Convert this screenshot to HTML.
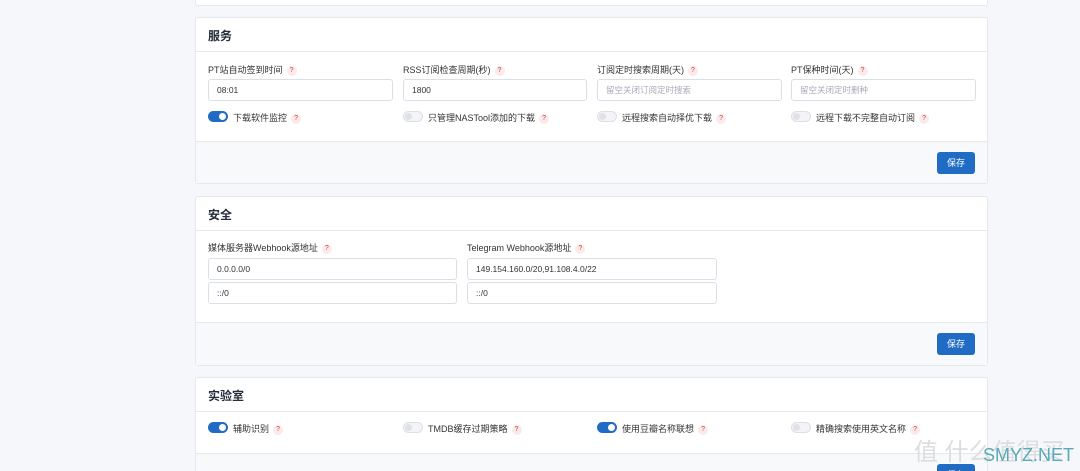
<html><head><style>
html,body{margin:0;height:471px;overflow:hidden}
body{background:#f5f7fb;font-family:"Liberation Sans","Noto Sans CJK SC",sans-serif;width:1080px;position:relative;color:#232e3c}
.card{position:absolute;left:195px;width:793px;background:#fff;border:1px solid #e6e8ee;border-radius:3px;box-sizing:border-box}
.hd{position:absolute;left:12px;font-size:12px;font-weight:bold}
.line{position:absolute;left:0;right:0;border-top:1px solid #e6e8ee}
.ft{position:absolute;left:0;right:0;bottom:0;background:#f8f9fb;border-top:1px solid #e6e8ee}
.btn{position:absolute;right:12px;width:38px;height:22px;background:#206bc4;border-radius:3px;color:#fff;font-size:9px;text-align:center;line-height:22px}
.lbl{position:absolute;font-size:9px;color:#333}
.q{display:inline-block;width:10px;height:10px;border-radius:5px;background:#fbeaea;color:#d63939;font-size:7px;text-align:center;line-height:10px;margin-left:4px;vertical-align:middle}
.in{position:absolute;height:22px;border:1px solid #dadfe5;border-radius:3px;box-sizing:border-box;font-size:8.5px;line-height:20px;padding-left:8px;color:#333}
.ph{color:#aab}
.sw{position:absolute;width:20px;height:11px;border-radius:6px;border:1px solid #dde;box-sizing:border-box;background:#f3f4f6}
.sw:after{content:"";position:absolute;left:1px;top:1px;width:7px;height:7px;border-radius:4px;background:#dfe1e5}
.sw.on{background:#206bc4;border-color:#206bc4}
.sw.on:after{left:10px;background:#fff}
</style></head><body>
<div class="card" style="top:-5px;height:11px"></div>

<div class="card" style="top:17px;height:167px">
<div class="hd" style="top:9px">服务</div>
<div class="line" style="top:33px"></div>
<div class="lbl" style="left:12px;top:45px">PT站自动签到时间<span class="q">?</span></div>
<div class="lbl" style="left:207px;top:45px">RSS订阅检查周期(秒)<span class="q">?</span></div>
<div class="lbl" style="left:401px;top:45px">订阅定时搜索周期(天)<span class="q">?</span></div>
<div class="lbl" style="left:595px;top:45px">PT保种时间(天)<span class="q">?</span></div>
<div class="in" style="left:12px;top:61px;width:185px">08:01</div>
<div class="in" style="left:207px;top:61px;width:184px">1800</div>
<div class="in ph" style="left:401px;top:61px;width:185px">留空关闭订阅定时搜索</div>
<div class="in ph" style="left:595px;top:61px;width:185px">留空关闭定时删种</div>
<div class="sw on" style="left:12px;top:93px"></div><div class="lbl" style="left:37px;top:93px">下载软件监控<span class="q">?</span></div>
<div class="sw" style="left:207px;top:93px"></div><div class="lbl" style="left:232px;top:93px">只管理NASTool添加的下载<span class="q">?</span></div>
<div class="sw" style="left:401px;top:93px"></div><div class="lbl" style="left:426px;top:93px">远程搜索自动择优下载<span class="q">?</span></div>
<div class="sw" style="left:595px;top:93px"></div><div class="lbl" style="left:620px;top:93px">远程下载不完整自动订阅<span class="q">?</span></div>
<div class="ft" style="height:41px"><div class="btn" style="top:10px">保存</div></div>
</div>

<div class="card" style="top:196px;height:170px">
<div class="hd" style="top:9px">安全</div>
<div class="line" style="top:33px"></div>
<div class="lbl" style="left:12px;top:44px">媒体服务器Webhook源地址<span class="q">?</span></div>
<div class="lbl" style="left:271px;top:44px">Telegram Webhook源地址<span class="q">?</span></div>
<div class="in" style="left:12px;top:61px;width:249px">0.0.0.0/0</div>
<div class="in" style="left:12px;top:85px;width:249px">::/0</div>
<div class="in" style="left:271px;top:61px;width:250px">149.154.160.0/20,91.108.4.0/22</div>
<div class="in" style="left:271px;top:85px;width:250px">::/0</div>
<div class="ft" style="height:42px"><div class="btn" style="top:10px">保存</div></div>
</div>

<div class="card" style="top:377px;height:110px">
<div class="hd" style="top:9px">实验室</div>
<div class="line" style="top:33px"></div>
<div class="sw on" style="left:12px;top:44px"></div><div class="lbl" style="left:37px;top:44px">辅助识别<span class="q">?</span></div>
<div class="sw" style="left:207px;top:44px"></div><div class="lbl" style="left:232px;top:44px">TMDB缓存过期策略<span class="q">?</span></div>
<div class="sw on" style="left:401px;top:44px"></div><div class="lbl" style="left:426px;top:44px">使用豆瓣名称联想<span class="q">?</span></div>
<div class="sw" style="left:595px;top:44px"></div><div class="lbl" style="left:620px;top:44px">精确搜索使用英文名称<span class="q">?</span></div>
<div class="ft" style="top:75px"><div class="btn" style="top:10px">保存</div></div>
</div>
<div style="position:absolute;left:914px;top:432px;font-size:24px;color:#ddd">值 什么值得买</div>
<div style="position:absolute;left:983px;top:445px;font-size:18px;color:#5aaab8">SMYZ.NET</div>
</body></html>
